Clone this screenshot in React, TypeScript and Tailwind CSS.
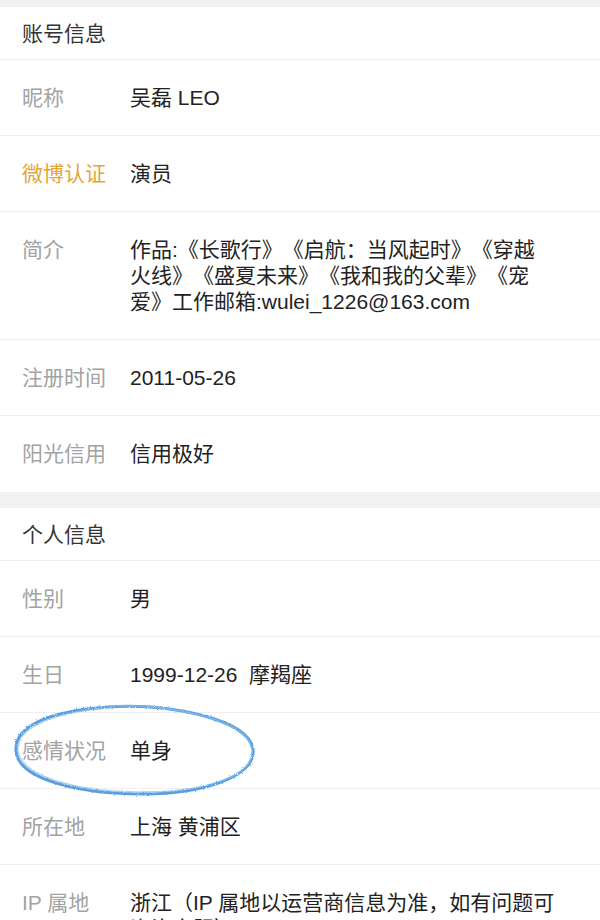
const account = [
  { label: "昵称", value: "吴磊 LEO" },
  { label: "微博认证", value: "演员", gold: true },
  {
    label: "简介",
    value: "作品:《长歌行》《启航：当风起时》《穿越\n火线》《盛夏未来》《我和我的父辈》《宠\n爱》工作邮箱:wulei_1226@163.com",
  },
  { label: "注册时间", value: "2011-05-26" },
  { label: "阳光信用", value: "信用极好", last: true },
];

const personal = [
  { label: "性别", value: "男" },
  { label: "生日", value: "1999-12-26  摩羯座" },
  { label: "感情状况", value: "单身", circled: true },
  { label: "所在地", value: "上海 黄浦区" },
  { label: "IP 属地", value: "浙江（IP 属地以运营商信息为准，如有问题可咨询客服）", last: true },
];

type Item = { label: string; value: string; gold?: boolean; circled?: boolean; last?: boolean };

function Circle() {
  return (
    <svg
      className="absolute left-[10px] top-[-12px] pointer-events-none"
      width="252"
      height="100"
      viewBox="0 0 252 100"
    >
      <defs>
        <filter id="rough">
          <feTurbulence type="fractalNoise" baseFrequency="0.9" numOctaves="2" result="n" />
          <feDisplacementMap in="SourceGraphic" in2="n" scale="2.5" />
        </filter>
      </defs>
      <g filter="url(#rough)" fill="none" strokeLinecap="round">
        <path
          d="M96 6 C 160 2, 238 18, 243 48 C 247 76, 190 94, 128 93 C 60 92, 8 76, 6 50 C 4 22, 48 9, 100 6"
          stroke="#5a9ee0"
          strokeWidth="3"
        />
        <path
          d="M100 5 C 166 3, 240 20, 242 49 C 244 78, 186 92, 126 91 C 62 90, 10 74, 8 49 C 6 24, 52 10, 104 6"
          stroke="#8cc0ef"
          strokeWidth="1.5"
          opacity="0.7"
        />
      </g>
    </svg>
  );
}

function Row({ item }: { item: Item }) {
  return (
    <div
      className={`relative flex pl-[22px] pr-[34px] pt-[25px] ${item.last ? "pb-[25px]" : "pb-[24px] border-b border-[#efefef]"}`}
    >
      {item.circled && <Circle />}
      <div className={`w-[108px] shrink-0 ${item.gold ? "text-[#e3a637]" : "text-[#a3a3a3]"}`}>{item.label}</div>
      <div className="flex-1 text-[#222222] whitespace-pre-wrap">{item.value}</div>
    </div>
  );
}

function Section({ title, items }: { title: string; items: Item[] }) {
  return (
    <div className="bg-white">
      <div className="pl-[22px] pt-[14px] pb-[12px] border-b border-[#efefef] text-[#333333]">{title}</div>
      {items.map((item) => (
        <Row key={item.label} item={item} />
      ))}
    </div>
  );
}

export default function App() {
  return (
    <div
      className="w-[600px] min-h-screen bg-[#f2f2f2] pt-[7px] text-[21px] leading-[26px] [text-spacing-trim:space-all]"
      style={{ fontFamily: '"Liberation Sans", "Noto Sans CJK SC", sans-serif' }}
    >
      <Section title="账号信息" items={account} />
      <div className="h-[16px]" />
      <Section title="个人信息" items={personal} />
    </div>
  );
}
